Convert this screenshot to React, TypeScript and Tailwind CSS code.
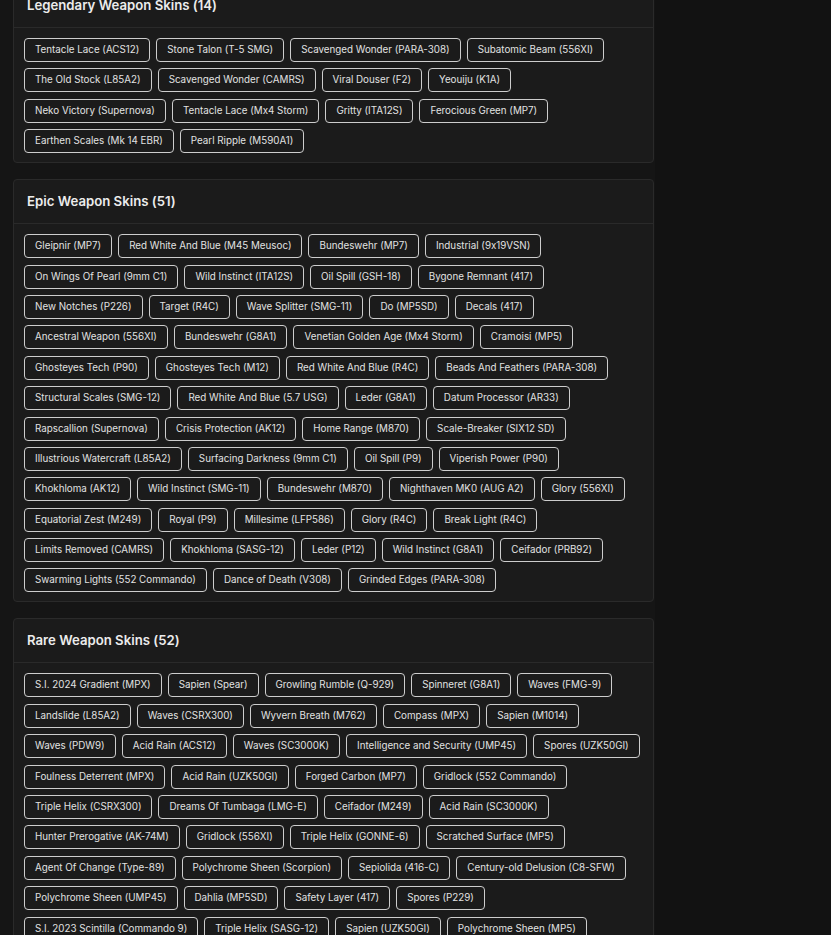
import React from "react";

type Section = { title: string; count: number; skins: string[] };

const sections: Section[] = [
  {
    title: "Legendary Weapon Skins",
    count: 14,
    skins: [
      "Tentacle Lace (ACS12)",
      "Stone Talon (T-5 SMG)",
      "Scavenged Wonder (PARA-308)",
      "Subatomic Beam (556XI)",
      "The Old Stock (L85A2)",
      "Scavenged Wonder (CAMRS)",
      "Viral Douser (F2)",
      "Yeouiju (K1A)",
      "Neko Victory (Supernova)",
      "Tentacle Lace (Mx4 Storm)",
      "Gritty (ITA12S)",
      "Ferocious Green (MP7)",
      "Earthen Scales (Mk 14 EBR)",
      "Pearl Ripple (M590A1)",
    ],
  },
  {
    title: "Epic Weapon Skins",
    count: 51,
    skins: [
      "Gleipnir (MP7)",
      "Red White And Blue (M45 Meusoc)",
      "Bundeswehr (MP7)",
      "Industrial (9x19VSN)",
      "On Wings Of Pearl (9mm C1)",
      "Wild Instinct (ITA12S)",
      "Oil Spill (GSH-18)",
      "Bygone Remnant (417)",
      "New Notches (P226)",
      "Target (R4C)",
      "Wave Splitter (SMG-11)",
      "Do (MP5SD)",
      "Decals (417)",
      "Ancestral Weapon (556XI)",
      "Bundeswehr (G8A1)",
      "Venetian Golden Age (Mx4 Storm)",
      "Cramoisi (MP5)",
      "Ghosteyes Tech (P90)",
      "Ghosteyes Tech (M12)",
      "Red White And Blue (R4C)",
      "Beads And Feathers (PARA-308)",
      "Structural Scales (SMG-12)",
      "Red White And Blue (5.7 USG)",
      "Leder (G8A1)",
      "Datum Processor (AR33)",
      "Rapscallion (Supernova)",
      "Crisis Protection (AK12)",
      "Home Range (M870)",
      "Scale-Breaker (SIX12 SD)",
      "Illustrious Watercraft (L85A2)",
      "Surfacing Darkness (9mm C1)",
      "Oil Spill (P9)",
      "Viperish Power (P90)",
      "Khokhloma (AK12)",
      "Wild Instinct (SMG-11)",
      "Bundeswehr (M870)",
      "Nighthaven MK0 (AUG A2)",
      "Glory (556XI)",
      "Equatorial Zest (M249)",
      "Royal (P9)",
      "Millesime (LFP586)",
      "Glory (R4C)",
      "Break Light (R4C)",
      "Limits Removed (CAMRS)",
      "Khokhloma (SASG-12)",
      "Leder (P12)",
      "Wild Instinct (G8A1)",
      "Ceifador (PRB92)",
      "Swarming Lights (552 Commando)",
      "Dance of Death (V308)",
      "Grinded Edges (PARA-308)",
    ],
  },
  {
    title: "Rare Weapon Skins",
    count: 52,
    skins: [
      "S.I. 2024 Gradient (MPX)",
      "Sapien (Spear)",
      "Growling Rumble (Q-929)",
      "Spinneret (G8A1)",
      "Waves (FMG-9)",
      "Landslide (L85A2)",
      "Waves (CSRX300)",
      "Wyvern Breath (M762)",
      "Compass (MPX)",
      "Sapien (M1014)",
      "Waves (PDW9)",
      "Acid Rain (ACS12)",
      "Waves (SC3000K)",
      "Intelligence and Security (UMP45)",
      "Spores (UZK50GI)",
      "Foulness Deterrent (MPX)",
      "Acid Rain (UZK50GI)",
      "Forged Carbon (MP7)",
      "Gridlock (552 Commando)",
      "Triple Helix (CSRX300)",
      "Dreams Of Tumbaga (LMG-E)",
      "Ceifador (M249)",
      "Acid Rain (SC3000K)",
      "Hunter Prerogative (AK-74M)",
      "Gridlock (556XI)",
      "Triple Helix (GONNE-6)",
      "Scratched Surface (MP5)",
      "Agent Of Change (Type-89)",
      "Polychrome Sheen (Scorpion)",
      "Sepiolida (416-C)",
      "Century-old Delusion (C8-SFW)",
      "Polychrome Sheen (UMP45)",
      "Dahlia (MP5SD)",
      "Safety Layer (417)",
      "Spores (P229)",
      "S.I. 2023 Scintilla (Commando 9)",
      "Triple Helix (SASG-12)",
      "Sapien (UZK50GI)",
      "Polychrome Sheen (MP5)",
    ],
  },
];

function SkinTag({ name }: { name: string }) {
  return (
    <span className="inline-flex items-center whitespace-nowrap rounded-[4px] border border-[#cdcdcd] px-[10px] py-[3px] text-[9.8px] leading-[16px] text-[#e2e2e2]">
      {name}
    </span>
  );
}

function SkinSection({ section }: { section: Section }) {
  return (
    <section className="rounded-[4px] border border-[#2a2a2a] bg-[#1b1b1b]">
      <header className="flex h-[44px] items-center border-b border-[#2a2a2a] px-[13px]">
        <h2 className="text-[13.2px] font-semibold text-[#ececec]">
          {section.title} ({section.count})
        </h2>
      </header>
      <div className="flex flex-wrap gap-x-[6px] gap-y-[6.4px] px-[10px] pt-[10px] pb-[9px]">
        {section.skins.map((s, i) => (
          <SkinTag key={i} name={s} />
        ))}
      </div>
    </section>
  );
}

export default function App() {
  return (
    <div className="min-h-screen overflow-hidden bg-[#121212] font-['Inter','Noto_Sans',sans-serif] [font-feature-settings:'calt'_0]">
      <div className="w-[655px] bg-[#151515] pl-[13px] pr-[1px]">
        <div className="-mt-[17px] flex flex-col gap-4 pb-4">
          {sections.map((s) => (
            <SkinSection key={s.title} section={s} />
          ))}
        </div>
      </div>
    </div>
  );
}
